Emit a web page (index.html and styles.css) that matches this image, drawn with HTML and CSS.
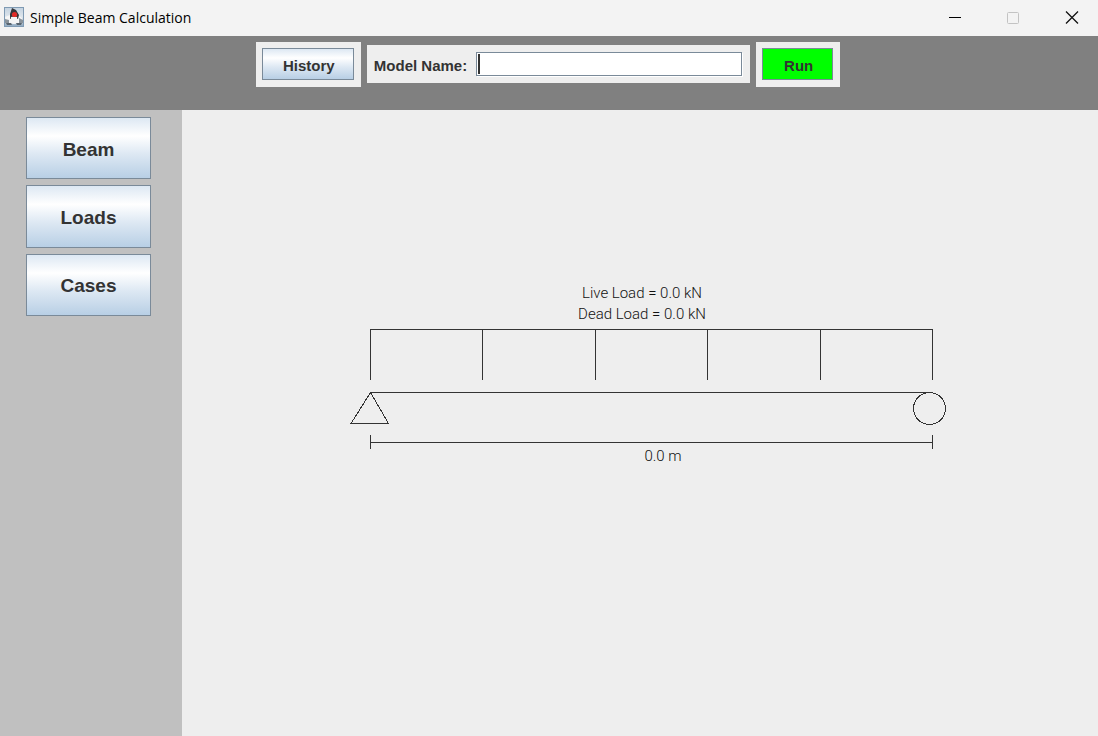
FILE: index.html
```html
<!DOCTYPE html>
<html lang="en">
<head>
<meta charset="utf-8">
<title>Simple Beam Calculation</title>
<link rel="stylesheet" href="styles.css">
</head>
<body>
<header class="titlebar">
  <svg class="app-icon" width="20" height="20" viewBox="0 0 20 20" aria-hidden="true">
    <defs><linearGradient id="sky" x1="0" y1="0" x2="0" y2="1"><stop offset="0" stop-color="#c3d2e0"/><stop offset=".5" stop-color="#dfe6ec"/><stop offset="1" stop-color="#8fa9c0"/></linearGradient></defs>
    <rect x=".5" y=".5" width="19" height="19" fill="url(#sky)" stroke="#7f9ab3"/>
    <path d="M1 10 6 8 8 12 6 17 2 16zM14 8l4 3 1 5-5 1-2-5z" fill="#f6f6f6"/>
    <path d="M1 12l4 1v4l-4-1zM15 11l4 2v3l-4 1z" fill="#8a939b"/>
    <path d="M8 1 12 3 15 8 14 12 6 12 6 7z" fill="#34363a"/>
    <path d="M7 10q4-1 6 0l1 6q-4 2-8 0z" fill="#f4f4f4"/>
    <path d="M2 16h5l1 2H3zM12 16h6l-1 2h-4z" fill="#59646e"/>
    <circle cx="10.500" cy="7.500" r="2.600" fill="#e02a26"/>
  </svg>
  <h1 class="title">Simple Beam Calculation</h1>
  <div class="window-controls">
    <button class="control" type="button" aria-label="Minimize"><svg width="14" height="14" viewBox="0 0 14 14"><path d="M0 6.500h12" stroke="#000"/></svg></button>
    <button class="control" type="button" aria-label="Maximize" disabled><svg width="14" height="14" viewBox="0 0 14 14"><rect x=".5" y="1.500" width="11" height="11" rx="1" fill="none" stroke="#c3c3c3"/></svg></button>
    <button class="control" type="button" aria-label="Close"><svg width="14" height="14" viewBox="0 0 14 14"><path d="M1 .5 13 12.500M13 .5 1 12.500" stroke="#111" stroke-width="1.300"/></svg></button>
  </div>
</header>
<div class="toolbar">
  <div class="panel"><button class="btn history" type="button">History</button></div>
  <div class="panel model">
    <label for="model-name">Model Name:</label>
    <input class="field" id="model-name" type="text">
  </div>
  <div class="panel"><button class="btn run" type="button">Run</button></div>
</div>
<div class="workspace">
  <nav class="sidebar" aria-label="Sections">
    <div class="sections">
      <button class="btn section" type="button">Beam</button>
      <button class="btn section" type="button">Loads</button>
      <button class="btn section" type="button">Cases</button>
    </div>
  </nav>
  <main class="canvas">
    <svg class="diagram" width="596" height="184" viewBox="0 0 596 184" role="img" aria-label="Beam diagram">
      <text x="292" y="14">Live Load = 0.0 kN</text>
      <text x="292" y="35">Dead Load = 0.0 kN</text>
      <g class="line">
        <path d="M20.500 96V45.500H582.500V96M132.500 46V96M245.500 46V96M357.500 46V96M470.500 46V96"/>
        <path d="M20 108.500H583M20.500 151V165M582.500 151V165M20 158.500H583"/>
        <path d="M20.500 108.500 1 139.500H38.500z"/>
        <circle cx="579.500" cy="124.500" r="16"/>
      </g>
      <text x="313" y="177">0.0 m</text>
    </svg>
  </main>
</div>
</body>
</html>
```

FILE: styles.css
```css
* { box-sizing: border-box; }

body {
  margin: 0;
  min-height: 100vh;
  display: flex;
  flex-direction: column;
  font-family: "Liberation Sans", Arial, sans-serif;
  color: #333;
  background: #eee;
}

.titlebar {
  display: flex;
  align-items: center;
  height: 36px;
  padding-left: 4px;
  gap: 6px;
  background: #f3f3f3;
}

.app-icon { margin-bottom: 2px; }

.title {
  flex: 1;
  margin: 0;
  font: 400 14px/20px "Open Sans", "Noto Sans", sans-serif;
  color: #000;
}

.window-controls { display: flex; gap: 6px; }

.control {
  display: grid;
  place-items: center;
  width: 52px;
  height: 34px;
  padding: 0;
  border: 0;
  background: none;
}

.toolbar {
  display: flex;
  justify-content: center;
  align-items: flex-start;
  gap: 6px;
  height: 74px;
  padding: 6px 2px 0 0;
  background: #808080;
}

.panel {
  padding: 6px 7px 7px 6px;
  background: #eee;
}

.model {
  display: flex;
  align-items: center;
  gap: 9px;
  height: 38px;
  margin-top: 3px;
  padding: 0 8px 0 7px;
  font-size: 15px;
  font-weight: 700;
}

.model label { padding-top: 3px; }

.field {
  width: 266px;
  height: 24px;
  padding: 0 4px;
  border: 1px solid #7a8a99;
  outline: 0;
  box-shadow: 1px 1px 0 #fff;
  background: linear-gradient(#333, #333) 1px 1px / 2px 20px no-repeat #fff;
  font: 15px "Liberation Sans", Arial, sans-serif;
}

.btn {
  display: block;
  height: 32px;
  padding: 3px 0 0 2px;
  border: 1px solid #7a8a99;
  border-radius: 0;
  background: linear-gradient(#dde8f3, #fff 30%, #dde8f3 60%, #b8cfe5);
  color: #333;
  font: 700 15px "Liberation Sans", Arial, sans-serif;
}

.history { width: 92px; }

.run { width: 71px; background: #0f0; }

.workspace { flex: 1; display: flex; }

.sidebar {
  flex: none;
  padding: 7px 31px 7px 26px;
  background: #c0c0c0;
}

.sections {
  display: grid;
  grid-template-rows: repeat(3, 1fr);
  gap: 6px;
  width: 125px;
  height: 199px;
}

.section { height: auto; padding-left: 0; font-size: 19px; }

.canvas {
  flex: 1;
  display: flex;
  justify-content: center;
  align-items: flex-start;
  padding: 174px 0 0 16px;
}

.diagram { overflow: visible; }

.diagram text {
  fill: #111;
  font: 300 15px Roboto, "Liberation Sans", sans-serif;
  text-anchor: middle;
}

.line { fill: none; stroke: #333; shape-rendering: crispEdges; }
```
